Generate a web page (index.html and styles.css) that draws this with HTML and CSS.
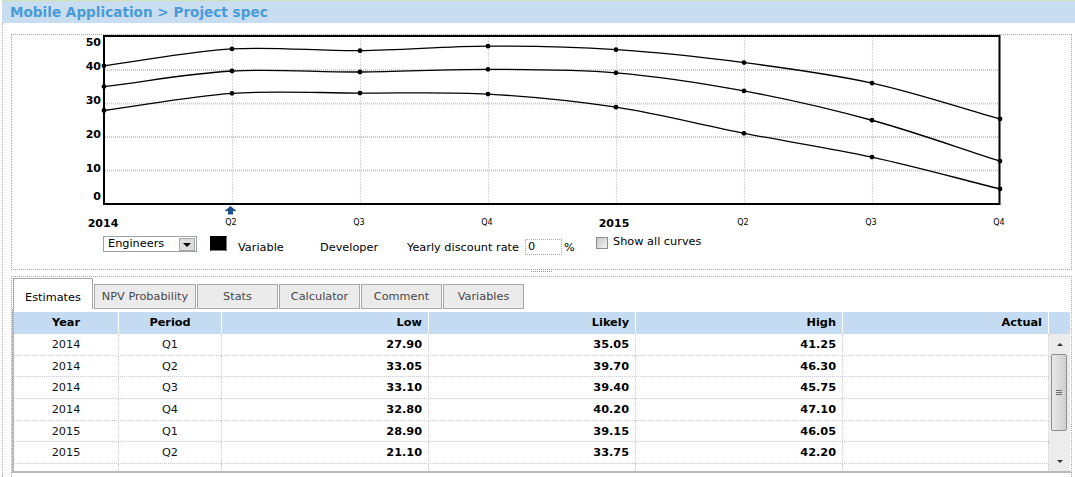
FILE: index.html
```html
<!DOCTYPE html>
<html>
<head>
<meta charset="utf-8">
<title>Project spec</title>
<link rel="stylesheet" href="styles.css">
</head>
<body>
<div class="header"><h1 class="title">Mobile Application &gt; Project spec</h1></div>
<div class="main">
  <div class="chart-panel">
    <svg class="chart" width="1059" height="195" viewBox="12 35 1059 195">
      <g class="grid-h">
        <line x1="105" x2="999" y1="70" y2="70"/>
        <line x1="105" x2="999" y1="103.5" y2="103.5"/>
        <line x1="105" x2="999" y1="137" y2="137"/>
        <line x1="105" x2="999" y1="170.5" y2="170.5"/>
      </g>
      <g class="grid-v">
        <line x1="232.5" x2="232.5" y1="37" y2="203"/>
        <line x1="360.5" x2="360.5" y1="37" y2="203"/>
        <line x1="488.5" x2="488.5" y1="37" y2="203"/>
        <line x1="616.5" x2="616.5" y1="37" y2="203"/>
        <line x1="744.5" x2="744.5" y1="37" y2="203"/>
        <line x1="872.5" x2="872.5" y1="37" y2="203"/>
      </g>
      <rect class="plot" x="104" y="36" width="895.5" height="168"/>
      <g class="curves" transform="translate(1 0)">
        <path d="M103,110.5 C145.67,104.77 188.33,96.2 231,93.3 C273.67,90.4 316.33,92.97 359,93.1 C401.67,93.23 444.33,91.75 487,94.1 C529.67,96.45 572.33,100.67 615,107.2 C657.67,113.73 700.33,124.98 743,133.3 C785.67,141.62 828.33,147.83 871,157.1 C913.67,166.37 956.33,178.3 999,188.9"/>
        <path d="M103,86.6 C145.67,81.4 188.33,73.43 231,71 C273.67,68.57 316.33,72.28 359,72 C401.67,71.72 444.33,69.17 487,69.3 C529.67,69.43 572.33,69.2 615,72.8 C657.67,76.4 700.33,82.99 743,90.9 C785.67,98.81 828.33,108.55 871,120.25 C913.67,131.95 956.33,147.48 999,161.1"/>
        <path d="M103,65.8 C145.67,60.17 188.33,51.42 231,48.9 C273.67,46.38 316.33,51.15 359,50.7 C401.67,50.25 444.33,46.37 487,46.2 C529.67,46.03 572.33,46.97 615,49.7 C657.67,52.43 700.33,57.03 743,62.6 C785.67,68.17 828.33,73.72 871,83.1 C913.67,92.48 956.33,106.97 999,118.9"/>
      </g>
      <g class="dots" transform="translate(1 0)">
        <circle cx="103" cy="110.5" r="2.4"/><circle cx="231" cy="93.3" r="2.4"/><circle cx="359" cy="93.1" r="2.4"/><circle cx="487" cy="94.1" r="2.4"/><circle cx="615" cy="107.2" r="2.4"/><circle cx="743" cy="133.3" r="2.4"/><circle cx="871" cy="157.1" r="2.4"/><circle cx="999" cy="188.9" r="2.4"/>
        <circle cx="103" cy="86.6" r="2.4"/><circle cx="231" cy="71" r="2.4"/><circle cx="359" cy="72" r="2.4"/><circle cx="487" cy="69.3" r="2.4"/><circle cx="615" cy="72.8" r="2.4"/><circle cx="743" cy="90.9" r="2.4"/><circle cx="871" cy="120.25" r="2.4"/><circle cx="999" cy="161.1" r="2.4"/>
        <circle cx="103" cy="65.8" r="2.4"/><circle cx="231" cy="48.9" r="2.4"/><circle cx="359" cy="50.7" r="2.4"/><circle cx="487" cy="46.2" r="2.4"/><circle cx="615" cy="49.7" r="2.4"/><circle cx="743" cy="62.6" r="2.4"/><circle cx="871" cy="83.1" r="2.4"/><circle cx="999" cy="118.9" r="2.4"/>
      </g>
      <g class="ylab">
        <text x="101" y="46">50</text>
        <text x="101" y="70">40</text>
        <text x="101" y="104">30</text>
        <text x="101" y="138">20</text>
        <text x="101" y="172">10</text>
        <text x="101" y="200">0</text>
      </g>
      <g class="xyear">
        <text x="103" y="227">2014</text>
        <text x="614" y="227">2015</text>
      </g>
      <g class="xq">
        <text x="231" y="225">Q2</text>
        <text x="359" y="225">Q3</text>
        <text x="487" y="225">Q4</text>
        <text x="743" y="225">Q2</text>
        <text x="871" y="225">Q3</text>
        <text x="999" y="225">Q4</text>
      </g>
      <polygon class="marker" points="230.5,206 236.5,211 233,211 233,214.5 228,214.5 228,211 224.5,211"/>
    </svg>
    <div class="controls">
      <div class="select">
        <span class="select-text">Engineers</span>
        <span class="select-btn"><span class="tri-down"></span></span>
      </div>
      <span class="swatch"></span>
      <span class="lbl lbl-variable">Variable</span>
      <span class="lbl lbl-developer">Developer</span>
      <span class="lbl lbl-rate">Yearly discount rate</span>
      <span class="rate-input">0</span>
      <span class="lbl lbl-pct">%</span>
      <span class="checkbox"></span>
      <span class="lbl lbl-show">Show all curves</span>
    </div>
  </div>
  <div class="splitter"><span class="handle"></span></div>
  <div class="bottom-panel">
    <div class="tabs">
      <div class="tab tab-est active">Estimates</div>
      <div class="tab tab-npv">NPV Probability</div>
      <div class="tab tab-std">Stats</div>
      <div class="tab tab-std">Calculator</div>
      <div class="tab tab-std">Comment</div>
      <div class="tab tab-std">Variables</div>
    </div>
    <div class="pane">
      <div class="thead">
        <div class="th center">Year</div>
        <div class="th center">Period</div>
        <div class="th right">Low</div>
        <div class="th right">Likely</div>
        <div class="th right">High</div>
        <div class="th right">Actual</div>
        <div class="th"></div>
      </div>
      <div class="tbody">
        <div class="rows">
          <div class="row"><div class="td center">2014</div><div class="td center">Q1</div><div class="td num">27.90</div><div class="td num">35.05</div><div class="td num">41.25</div><div class="td"></div></div>
          <div class="row"><div class="td center">2014</div><div class="td center">Q2</div><div class="td num">33.05</div><div class="td num">39.70</div><div class="td num">46.30</div><div class="td"></div></div>
          <div class="row"><div class="td center">2014</div><div class="td center">Q3</div><div class="td num">33.10</div><div class="td num">39.40</div><div class="td num">45.75</div><div class="td"></div></div>
          <div class="row"><div class="td center">2014</div><div class="td center">Q4</div><div class="td num">32.80</div><div class="td num">40.20</div><div class="td num">47.10</div><div class="td"></div></div>
          <div class="row"><div class="td center">2015</div><div class="td center">Q1</div><div class="td num">28.90</div><div class="td num">39.15</div><div class="td num">46.05</div><div class="td"></div></div>
          <div class="row"><div class="td center">2015</div><div class="td center">Q2</div><div class="td num">21.10</div><div class="td num">33.75</div><div class="td num">42.20</div><div class="td"></div></div>
          <div class="row filler"><div class="td"></div><div class="td"></div><div class="td"></div><div class="td"></div><div class="td"></div><div class="td"></div></div>
        </div>
        <div class="scrollbar">
          <div class="sb-btn"><span class="tri-up"></span></div>
          <div class="sb-thumb"><span class="grip"></span><span class="grip"></span><span class="grip"></span></div>
          <div class="sb-space"></div>
          <div class="sb-btn"><span class="tri-down small"></span></div>
        </div>
      </div>
    </div>
  </div>
</div>
</body>
</html>
```

FILE: styles.css
```css
html, body {
  margin: 0;
  height: 477px;
  overflow: hidden;
  background: #fff;
  font-family: "DejaVu Sans", Verdana, sans-serif;
  font-size: 11.3px;
  color: #000;
}

.header {
  margin-left: 2px;
  height: 22px;
  border-top: 1px solid #cfe2b4;
  background: #c8def0;
  display: flex;
  align-items: center;
  padding-left: 8px;
}

.title {
  margin: 0;
  font-size: 13.6px;
  font-weight: bold;
  color: #4a9ad6;
}

.main {
  margin-left: 2px;
  border-left: 1px dotted #b4b4c8;
  padding: 11px 3px 0 8px;
  height: 443px;
}

.chart-panel {
  border: 1px dotted #a4a4c4;
  height: 234px;
}

.chart {
  display: block;
}

.grid-h line {
  stroke: #c4c4f2;
  stroke-width: 2;
  stroke-dasharray: 1 1;
}

.grid-v line {
  stroke: #d4d4f6;
  stroke-width: 1;
  stroke-dasharray: 2 1;
}

.plot {
  fill: none;
  stroke: #000;
  stroke-width: 2;
}

.curves path {
  fill: none;
  stroke: #000;
  stroke-width: 1.3;
}

.dots circle {
  fill: #000;
}

.ylab text {
  font-family: "DejaVu Sans", Verdana, sans-serif;
  font-size: 11px;
  font-weight: bold;
  text-anchor: end;
  fill: #000;
}

.xyear text {
  font-family: "DejaVu Sans", Verdana, sans-serif;
  font-size: 11px;
  font-weight: bold;
  text-anchor: middle;
  fill: #000;
}

.xq text {
  font-family: "DejaVu Sans", Verdana, sans-serif;
  font-size: 8px;
  text-anchor: middle;
  fill: #000;
}

.marker {
  fill: #1f4f8c;
}

/* controls row */
.controls {
  height: 39px;
  display: flex;
  align-items: flex-start;
  padding-left: 91px;
}

.select {
  margin-top: 6px;
  width: 94px;
  height: 16px;
  box-sizing: border-box;
  border: 1px solid #9aa2ac;
  background: #fff;
  display: flex;
  align-items: center;
}

.select-text {
  flex: 1;
  padding-left: 4px;
  line-height: 14px;
}

.select-btn {
  width: 16px;
  height: 13px;
  margin-right: 1px;
  box-sizing: border-box;
  border: 1px solid #a8a8a8;
  background: #dcdcdc;
  display: flex;
  align-items: center;
  justify-content: center;
}

.tri-down {
  width: 0;
  height: 0;
  border-left: 4px solid transparent;
  border-right: 4px solid transparent;
  border-top: 4px solid #000;
  margin-top: 2px;
}

.tri-down.small {
  border-left-width: 3px;
  border-right-width: 3px;
  border-top: 3px solid #333;
  margin-top: 0;
}

.tri-up {
  width: 0;
  height: 0;
  border-left: 3px solid transparent;
  border-right: 3px solid transparent;
  border-bottom: 3px solid #333;
}

.swatch {
  margin-left: 13px;
  margin-top: 6px;
  width: 17px;
  height: 15px;
  box-sizing: border-box;
  background: #000;
  border: 1px solid #7a7a7a;
  border-top-color: #000;
  border-left-color: #000;
}

.lbl {
  margin-top: 11px;
  line-height: 14px;
  white-space: nowrap;
}

.lbl-variable { margin-left: 11px; width: 82px; }
.lbl-developer { width: 87px; }
.lbl-rate { width: 118px; }
.lbl-pct { margin-left: 2px; width: 32px; }
.lbl-show { margin-left: 5px; margin-top: 5px; }

.rate-input {
  margin-top: 9px;
  width: 37px;
  height: 16px;
  box-sizing: border-box;
  border: 1px dotted #a8a8a8;
  padding-left: 2px;
  line-height: 14px;
}

.checkbox {
  margin-top: 7px;
  width: 12px;
  height: 12px;
  box-sizing: border-box;
  border: 1px solid #8c8c8c;
  background: linear-gradient(135deg, #c8c8c8, #f2f2f2);
}

/* splitter */
.splitter {
  height: 6px;
  display: flex;
  justify-content: center;
}

.handle {
  margin-top: 1px;
  width: 21px;
  height: 0;
  border-top: 1px dotted #9090b8;
}

/* bottom panel */
.bottom-panel {
  border: 1px dotted #a4a4c4;
  border-bottom: none;
  height: 200px;
}

.tabs {
  display: flex;
  align-items: flex-end;
  height: 32px;
  padding-left: 1px;
}

.tab {
  height: 25px;
  box-sizing: border-box;
  border: 1px solid #a8a8a8;
  background: #ebebeb;
  color: #484848;
  margin-left: 1px;
  display: flex;
  align-items: center;
  justify-content: center;
  width: 81px;
}

.tab-est {
  margin-left: 0;
  width: 80px;
}

.tab-npv {
  width: 102px;
}

.tab.active {
  height: 31px;
  background: #fff;
  border-bottom: none;
  color: #000;
  padding-top: 7px;
}

.pane {
  border-left: 2px solid #b8b8c0;
  border-bottom: 2px solid #b8b8c0;
  padding-top: 3px;
}

.thead {
  display: grid;
  grid-template-columns: 104px 102px 206px 206px 206px 205px 21px;
  column-gap: 1px;
  height: 22px;
  background: #fff;
}

.th {
  background: #c5dbf1;
  font-weight: bold;
  line-height: 22px;
}

.center { text-align: center; }
.right { text-align: right; padding-right: 6px; }

.tbody {
  display: flex;
  height: 137px;
}

.rows {
  width: 1035px;
  overflow: hidden;
}

.row {
  display: grid;
  grid-template-columns: 105px 103px 207px 207px 207px 206px;
  height: 21.67px;
  box-sizing: border-box;
  border-bottom: 1px dotted #c8c8d8;
}

.row.filler {
  height: 12px;
  border-bottom: none;
}

.td {
  border-right: 1px dotted #d0d0dc;
  line-height: 22px;
  color: #111;
}

.td.num {
  text-align: right;
  padding-right: 6px;
  font-weight: bold;
  color: #000;
}

.scrollbar {
  width: 21px;
  background: #ececec;
  display: flex;
  flex-direction: column;
}

.sb-btn {
  height: 20px;
  display: flex;
  align-items: center;
  justify-content: center;
}

.sb-thumb {
  margin: 0 0 0 2px;
  width: 16px;
  height: 77px;
  box-sizing: border-box;
  border: 1px solid #8e8f8f;
  border-radius: 2px;
  background: linear-gradient(to right, #e8e8e8, #cfcfcf);
  display: flex;
  flex-direction: column;
  align-items: center;
  justify-content: center;
  gap: 1px;
}

.grip {
  width: 6px;
  height: 1px;
  background: #6c6c6c;
}

.sb-space {
  flex: 1;
}
```
